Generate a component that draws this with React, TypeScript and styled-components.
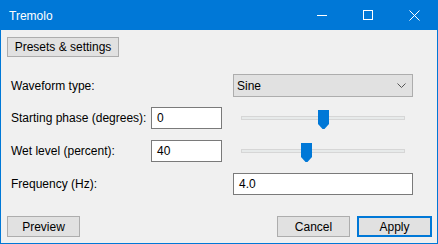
import React from 'react';
import styled, { createGlobalStyle } from 'styled-components';

const GlobalStyle = createGlobalStyle`
	html, body {
		margin: 0;
		padding: 0;
		background: #f0f0f0;
	}
	body {
		font-family: "Liberation Sans", Arial, sans-serif;
		font-size: 12px;
		color: #000;
	}
`;

const ACCENT = '#0078d7';

type SliderRow = { label: string; value: string; thumb: number };

const sliderRows: SliderRow[] = [
	{ label: 'Starting phase (degrees):', value: '0', thumb: 77 },
	{ label: 'Wet level (percent):', value: '40', thumb: 60 },
];

const App: React.FC = () => {
	return (
		<>
			<GlobalStyle />
			<Window>
				<TitleBar>
					<Title>Tremolo</Title>
					<Caption>
						<CaptionButton>
							<svg width="10" height="10" viewBox="0 0 10 10">
								<path d="M0 5.5 H10" stroke="#fff" strokeWidth="1" />
							</svg>
						</CaptionButton>
						<CaptionButton>
							<svg width="10" height="10" viewBox="0 0 10 10">
								<rect x="0.5" y="0.5" width="9" height="9" fill="none" stroke="#fff" strokeWidth="1" />
							</svg>
						</CaptionButton>
						<CaptionButton>
							<svg width="11" height="11" viewBox="0 0 11 11">
								<path d="M0.5 0.5 L10.5 10.5 M10.5 0.5 L0.5 10.5" stroke="#fff" strokeWidth="1" />
							</svg>
						</CaptionButton>
					</Caption>
				</TitleBar>

				<Body>
					<TopBar>
						<Button width={112} height={20}>Presets &amp; settings</Button>
					</TopBar>

					<Form>
						<Row>
							<Label width={222}>Waveform type:</Label>
							<Select>
								<span>Sine</span>
								<svg width="9" height="5" viewBox="0 0 9 5">
									<path d="M0.5 0.5 L4.5 4.5 L8.5 0.5" fill="none" stroke="#555" strokeWidth="1" />
								</svg>
							</Select>
						</Row>

						{sliderRows.map((r) => (
							<Row key={r.label}>
								<Label width={140}>{r.label}</Label>
								<Field width={71}>{r.value}</Field>
								<Slider>
									<Track />
									<Thumb style={{ left: 8 + r.thumb }}>
										<svg width="11" height="19" viewBox="0 0 11 19">
											<polygon points="0,0 11,0 11,14 6.5,19 4.5,19 0,14" fill={ACCENT} />
										</svg>
									</Thumb>
								</Slider>
							</Row>
						))}

						<Row>
							<Label width={222}>Frequency (Hz):</Label>
							<Field width={180}>4.0</Field>
						</Row>
					</Form>

					<Footer>
						<Button width={73} height={21}>Preview</Button>
						<FooterRight>
							<Button width={73} height={21}>Cancel</Button>
							<Button width={75} height={21} primary>Apply</Button>
						</FooterRight>
					</Footer>
				</Body>
			</Window>
		</>
	);
};

export default App;

const Window = styled.div`
	width: 438px;
	height: 244px;
	box-sizing: border-box;
	border: 1px solid ${ACCENT};
	border-top: none;
	display: flex;
	flex-direction: column;
	background: #f0f0f0;
`;

const TitleBar = styled.div`
	height: 30px;
	flex: none;
	background: ${ACCENT};
	display: flex;
	align-items: center;
	justify-content: space-between;
`;

const Title = styled.div`
	color: #fff;
	padding-left: 8px;
	font-size: 12px;
	margin-top: 1px;
`;

const Caption = styled.div`
	display: flex;
	height: 100%;
`;

const CaptionButton = styled.div`
	width: 46px;
	height: 100%;
	display: flex;
	align-items: center;
	justify-content: center;
	svg {
		display: block;
	}
`;

const Body = styled.div`
	flex: 1;
	display: flex;
	flex-direction: column;
	padding: 7px 5px 6px 6px;
`;

const TopBar = styled.div`
	display: flex;
`;

const Button = styled.div<{ width: number; height: number; primary?: boolean }>`
	box-sizing: border-box;
	width: ${(p) => p.width}px;
	height: ${(p) => p.height}px;
	background: #e1e1e1;
	border: ${(p) => (p.primary ? `2px solid ${ACCENT}` : '1px solid #adadad')};
	display: flex;
	align-items: center;
	justify-content: center;
	white-space: nowrap;
`;

const Form = styled.div`
	display: flex;
	flex-direction: column;
	gap: 10px;
	margin-top: 17px;
	padding-left: 4px;
`;

const Row = styled.div`
	display: flex;
	align-items: center;
	min-height: 22px;
	& + & {
		margin-top: 1px;
	}
	&:nth-child(2) {
		margin-top: 0;
	}
`;

const Label = styled.div<{ width: number }>`
	width: ${(p) => p.width}px;
	flex: none;
	white-space: nowrap;
`;

const Select = styled.div`
	box-sizing: border-box;
	width: 180px;
	height: 23px;
	background: #e1e1e1;
	border: 1px solid #adadad;
	display: flex;
	align-items: center;
	justify-content: space-between;
	padding: 0 6px 0 3px;
	svg {
		display: block;
	}
`;

const Field = styled.div<{ width: number }>`
	box-sizing: border-box;
	width: ${(p) => p.width}px;
	height: 22px;
	background: #fff;
	border: 1px solid #7a7a7a;
	display: flex;
	align-items: center;
	padding-left: 5px;
`;

const Slider = styled.div`
	position: relative;
	width: 180px;
	height: 22px;
	margin-left: 11px;
	box-sizing: border-box;
	padding: 0 8px;
	display: flex;
	align-items: center;
`;

const Track = styled.div`
	flex: 1;
	height: 4px;
	box-sizing: border-box;
	background: #e7eaea;
	border: 1px solid #d6d6d6;
`;

const Thumb = styled.div`
	position: absolute;
	top: 3px;
	width: 11px;
	height: 19px;
	svg {
		display: block;
	}
`;

const Footer = styled.div`
	margin-top: auto;
	display: flex;
	justify-content: space-between;
	align-items: flex-end;
`;

const FooterRight = styled.div`
	display: flex;
	gap: 7px;
`;
